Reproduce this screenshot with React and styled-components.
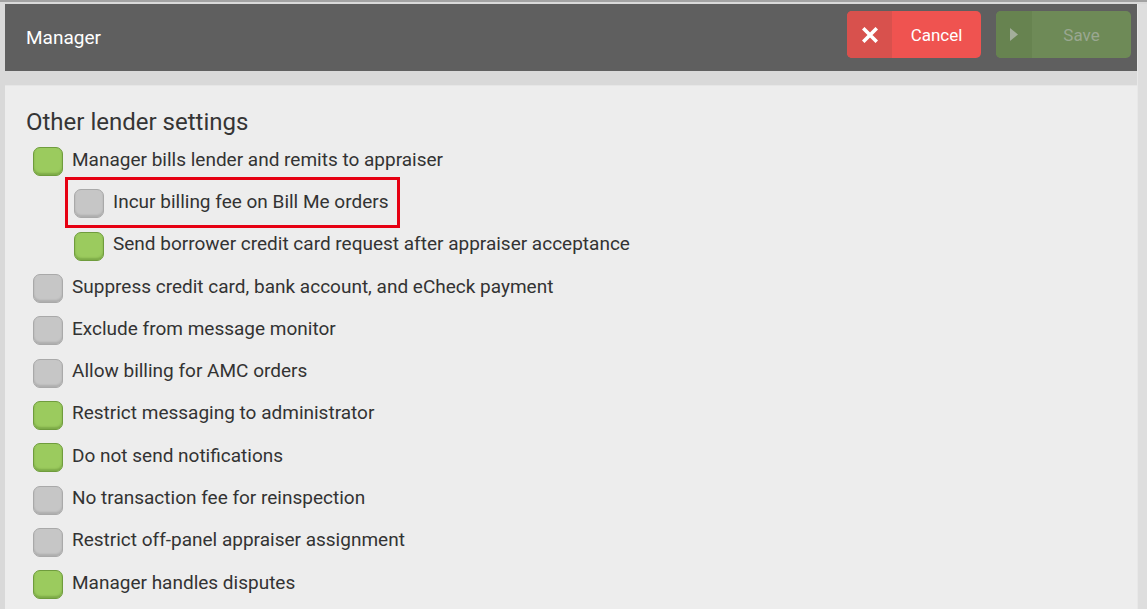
import React from 'react';
import styled, { createGlobalStyle } from 'styled-components';

const Global = createGlobalStyle`
  html, body { margin: 0; padding: 0; }
  body {
    background: #d9d9d9;
    font-family: Roboto, "Noto Sans", sans-serif;
    overflow: hidden;
  }
`;

const Page = styled.div`
  display: flex;
  height: 609px;
  box-sizing: border-box;
  border-top: 2px solid #a2a2a2;
  padding-top: 2px;
`;

const Main = styled.div`
  flex: 1;
  display: flex;
  flex-direction: column;
  gap: 14px;
  padding-left: 5px;
  min-width: 0;
`;

const Gutter = styled.div`
  width: 9px;
  background: #dedede;
  border-left: 1px solid #e8e8e8;
`;

const Header = styled.header`
  height: 67px;
  flex: none;
  background: #5f5f5f;
  display: flex;
  align-items: flex-start;
  padding: 0 6px 0 21px;
`;

const HeaderTitle = styled.h1`
  flex: 1;
  margin: 0;
  font-size: 19px;
  font-weight: 400;
  line-height: 67px;
  color: #ffffff;
`;

const Actions = styled.div`
  display: flex;
  gap: 15px;
  margin-top: 7px;
`;

const Button = styled.button`
  display: flex;
  width: ${p => p.$w}px;
  height: 47px;
  padding: 0;
  border: none;
  border-radius: 5px;
  overflow: hidden;
  background: ${p => p.$bg};
  color: ${p => p.$fg};
  font-family: Roboto, "Noto Sans", sans-serif;
  font-size: 17px;
  cursor: pointer;
`;

const ButtonIcon = styled.span`
  width: ${p => p.$w}px;
  flex: none;
  display: flex;
  align-items: center;
  justify-content: center;
  background: ${p => p.$bg};
`;

const ButtonLabel = styled.span`
  flex: 1;
  display: flex;
  align-items: center;
  justify-content: center;
`;

const Panel = styled.section`
  flex: 1;
  background: #ededed;
  border-top: 1px solid #e6e6e6;
  padding: 22px 21px 0;
`;

const Title = styled.h2`
  margin: 0 0 2px;
  font-size: 24px;
  font-weight: 400;
  line-height: 28px;
  color: #353535;
`;

const List = styled.div`
  display: flex;
  flex-direction: column;
  padding-left: 7px;
`;

const Row = styled.label`
  position: relative;
  display: flex;
  align-items: center;
  gap: 9px;
  width: fit-content;
  height: 42.3px;
  margin-left: ${p => (p.$sub ? 41 : 0)}px;
  font-size: 19px;
  color: #333333;

  ${p =>
    p.$highlight &&
    `
    &::after {
      content: '';
      position: absolute;
      top: -3px;
      bottom: -5px;
      left: -9px;
      right: -12px;
      border: 3.5px solid #e60012;
      pointer-events: none;
    }
  `}
`;

const Box = styled.span`
  width: 30px;
  height: 29px;
  flex: none;
  box-sizing: border-box;
  margin-top: 5px;
  border-radius: 7px;
  border: 1.5px solid ${p => (p.$on ? '#6f9c3d' : '#a9a9a9')};
  background: ${p => (p.$on ? '#9bcb5e' : '#c6c6c6')};
  box-shadow: inset 0 -2px 2px ${p => (p.$on ? 'rgba(70,110,30,0.35)' : 'rgba(0,0,0,0.12)')};
`;

const items = [
  { label: 'Manager bills lender and remits to appraiser', on: true },
  { label: 'Incur billing fee on Bill Me orders', on: false, sub: true, highlight: true },
  { label: 'Send borrower credit card request after appraiser acceptance', on: true, sub: true },
  { label: 'Suppress credit card, bank account, and eCheck payment', on: false },
  { label: 'Exclude from message monitor', on: false },
  { label: 'Allow billing for AMC orders', on: false },
  { label: 'Restrict messaging to administrator', on: true },
  { label: 'Do not send notifications', on: true },
  { label: 'No transaction fee for reinspection', on: false },
  { label: 'Restrict off-panel appraiser assignment', on: false },
  { label: 'Manager handles disputes', on: true },
];

export default function App() {
  return (
    <>
      <Global />
      <Page>
        <Main>
          <Header>
            <HeaderTitle>Manager</HeaderTitle>
            <Actions>
              <Button $w={134} $bg="#ef5350" $fg="#ffffff">
                <ButtonIcon $w={45} $bg="#d8514d">
                  <svg width="16" height="16" viewBox="0 0 16 16">
                    <path d="M2.5 2.5 L13.5 13.5 M13.5 2.5 L2.5 13.5" stroke="#fff" strokeWidth="3.6" strokeLinecap="square" />
                  </svg>
                </ButtonIcon>
                <ButtonLabel>Cancel</ButtonLabel>
              </Button>
              <Button $w={135} $bg="#6e8a57" $fg="#9aa791">
                <ButtonIcon $w={36} $bg="#678350">
                  <svg width="8" height="13" viewBox="0 0 8 13">
                    <polygon points="0,0 8,6.5 0,13" fill="#a3ae9b" />
                  </svg>
                </ButtonIcon>
                <ButtonLabel>Save</ButtonLabel>
              </Button>
            </Actions>
          </Header>
          <Panel>
            <Title>Other lender settings</Title>
            <List>
              {items.map(it => (
                <Row key={it.label} $sub={it.sub} $highlight={it.highlight}>
                  <Box $on={it.on} />
                  {it.label}
                </Row>
              ))}
            </List>
          </Panel>
        </Main>
        <Gutter />
      </Page>
    </>
  );
}
